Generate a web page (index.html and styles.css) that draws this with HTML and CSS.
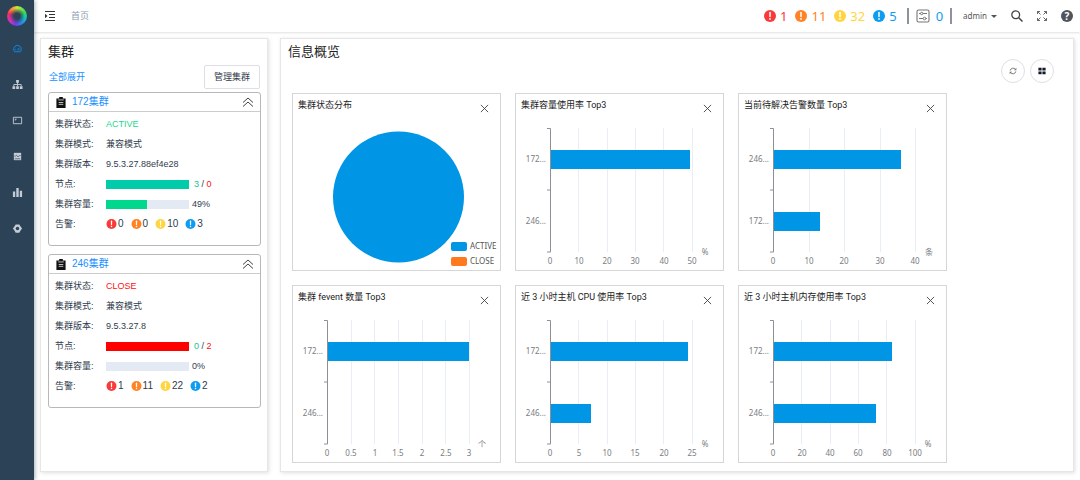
FILE: index.html
```html
<!DOCTYPE html>
<html lang="zh-CN">
<head>
<meta charset="utf-8">
<meta name="viewport" content="width=device-width, initial-scale=1">
<title>集群</title>
<link rel="stylesheet" href="styles.css">
</head>
<body>
<svg class="defs" aria-hidden="true">
  <symbol id="alert" viewBox="0 0 12 12"><circle cx="6" cy="6" r="6" fill="currentColor"/><path d="M6 2.6v4" stroke="#fff" stroke-width="1.5" stroke-linecap="round"/><circle cx="6" cy="8.9" r=".9" fill="#fff"/></symbol>
  <symbol id="close" viewBox="0 0 10 10"><path d="M1 1l8 8M9 1l-8 8" stroke="currentColor" stroke-width="1" fill="none"/></symbol>
  <symbol id="clipboard" viewBox="0 0 10 12"><path d="M0 1.500h3V0h4v1.500h3V12H0z" fill="#111"/><path d="M2 3.200h6M2.500 6h5M2.500 8h5" stroke="#fff" stroke-width=".8"/></symbol>
  <symbol id="up" viewBox="0 0 12 10"><path d="M1 5.500L6 1l5 4.500M1 9.500L6 5l5 4.500" stroke="#444" stroke-width="1" fill="none"/></symbol>
  <symbol id="axis" viewBox="0 0 207 152"><path d="M31 10.500h3.500v123.500H31M31 72h3.500" stroke="#8d9096" fill="none"/></symbol>
</svg>
<div class="shell">
  <nav class="sidebar" aria-label="主菜单">
    <div class="logo"></div>
    <a class="nav active" href="#" aria-label="总览"><svg viewBox="0 0 12 12"><path d="M3 9.500a4 4 0 1 1 6 0zM6 8l1.600-2.500M3.500 7h1M8 7h.8" fill="none" stroke="currentColor" stroke-width="1.300"/></svg></a>
    <a class="nav" href="#" aria-label="集群"><svg viewBox="0 0 12 12"><path d="M4.500 1h3v3h-3zM.5 8h3v3h-3zM4.500 8h3v3h-3zM8.500 8h3v3h-3z" fill="currentColor"/><path d="M6 3v5M2 8V6h8v2" stroke="currentColor" fill="none"/></svg></a>
    <a class="nav" href="#" aria-label="主机"><svg viewBox="0 0 12 12"><path d="M1.500 2.500h9v7h-9zM3.500 6V4.500H5" stroke="currentColor" fill="none"/></svg></a>
    <a class="nav" href="#" aria-label="监控"><svg viewBox="0 0 12 12"><path d="M2 2h8v8H2z" fill="currentColor"/><path d="M2.500 5.500H4l1-1 1.500 2L8 5h1.500M3 8.500h6" stroke="#2c4257" stroke-width=".7" fill="none"/></svg></a>
    <a class="nav" href="#" aria-label="统计"><svg viewBox="0 0 12 12"><path d="M1 5h2.500v6H1zM4.700 1h2.600v10H4.700zM8.500 4H11v7H8.500z" fill="currentColor"/></svg></a>
    <a class="nav" href="#" aria-label="设置"><svg viewBox="0 0 12 12"><path d="M4 1.500h4L9 3.200 11 6 9 8.800l-1 1.700H4L3 8.800 1 6l2-2.800z" fill="currentColor"/><circle cx="6" cy="6" r="1.900" fill="#2c4257"/></svg></a>
  </nav>
  <div class="page">
    <header class="topbar">
      <button class="icon-btn" aria-label="折叠菜单"><svg class="i12" viewBox="0 0 12 12"><path d="M1 1.500h10M5 4.500h6M5 7.500h6M1 10.500h10" stroke="#333" stroke-width="1.200"/><path d="M1 3.800L3.500 6 1 8.200z" fill="#333"/></svg></button>
      <a class="crumb" href="#">首页</a>
      <div class="counts">
        <span class="count red"><svg><use href="#alert"/></svg>1</span>
        <span class="count orange"><svg><use href="#alert"/></svg>11</span>
        <span class="count yellow"><svg><use href="#alert"/></svg>32</span>
        <span class="count blue"><svg><use href="#alert"/></svg>5</span>
      </div>
      <div class="tasks"><svg viewBox="0 0 14 14"><rect x="1" y="1" width="12" height="12" rx="1.500" fill="none" stroke="#777" stroke-width="1.100"/><path d="M3 4.500h1.500M7 4.500h4M3 9.500h4M9.800 9.500H11" stroke="#777"/><circle cx="5.700" cy="4.500" r="1.200" fill="none" stroke="#777"/><circle cx="8.500" cy="9.500" r="1.300" fill="none" stroke="#777"/></svg>0</div>
      <button class="user">admin<i class="caret"></i></button>
      <div class="tools">
        <button class="icon-btn" aria-label="搜索"><svg class="i12" viewBox="0 0 12 12"><circle cx="4.700" cy="4.700" r="3.900" fill="none" stroke="#444" stroke-width="1.300"/><path d="M7.500 7.500l4 4" stroke="#444" stroke-width="1.500"/></svg></button>
        <button class="icon-btn" aria-label="全屏"><svg class="i12" viewBox="0 0 12 12"><path d="M1.500 4V1.500H4M8 1.500h2.500V4M10.500 8v2.500H8M4 10.500H1.500V8M1.500 1.500l3 3M10.500 1.500l-3 3M1.500 10.500l3-3M10.500 10.500l-3-3" fill="none" stroke="#666"/></svg></button>
        <button class="help" aria-label="帮助">?</button>
      </div>
    </header>
    <main class="main">
      <section class="panel clusters">
        <h2>集群</h2>
        <div class="actions"><a href="#">全部展开</a><button class="manage">管理集群</button></div>
        <article class="cluster">
          <header><svg class="clip"><use href="#clipboard"/></svg><a href="#">172集群</a><button class="icon-btn" aria-label="收起"><svg class="i12"><use href="#up"/></svg></button></header>
          <dl>
            <dt>集群状态:</dt><dd class="ok">ACTIVE</dd>
            <dt>集群模式:</dt><dd>兼容模式</dd>
            <dt>集群版本:</dt><dd>9.5.3.27.88ef4e28</dd>
            <dt>节点:</dt><dd><span class="bar nodes-ok"></span><span class="nodes"><b class="teal">3</b> / <b class="bad">0</b></span></dd>
            <dt>集群容量:</dt><dd><span class="bar"><span class="fill" style="width:49%"></span></span>49%</dd>
            <dt>告警:</dt><dd class="alarms"><span><svg class="red"><use href="#alert"/></svg>0</span><span><svg class="orange"><use href="#alert"/></svg>0</span><span><svg class="yellow"><use href="#alert"/></svg>10</span><span><svg class="blue"><use href="#alert"/></svg>3</span></dd>
          </dl>
        </article>
        <article class="cluster">
          <header><svg class="clip"><use href="#clipboard"/></svg><a href="#">246集群</a><button class="icon-btn" aria-label="收起"><svg class="i12"><use href="#up"/></svg></button></header>
          <dl>
            <dt>集群状态:</dt><dd class="bad">CLOSE</dd>
            <dt>集群模式:</dt><dd>兼容模式</dd>
            <dt>集群版本:</dt><dd>9.5.3.27.8</dd>
            <dt>节点:</dt><dd><span class="bar nodes-bad"></span><span class="nodes"><b class="teal">0</b> / <b class="bad">2</b></span></dd>
            <dt>集群容量:</dt><dd><span class="bar"></span>0%</dd>
            <dt>告警:</dt><dd class="alarms"><span><svg class="red"><use href="#alert"/></svg>1</span><span><svg class="orange"><use href="#alert"/></svg>11</span><span><svg class="yellow"><use href="#alert"/></svg>22</span><span><svg class="blue"><use href="#alert"/></svg>2</span></dd>
          </dl>
        </article>
      </section>
      <section class="panel overview">
        <h2>信息概览</h2>
        <div class="round-row">
          <button class="round" aria-label="刷新"><svg viewBox="0 0 10 10"><path d="M1.500 4.500A3.600 3.600 0 0 1 8 3M8.500 5.500A3.600 3.600 0 0 1 2 7" fill="none" stroke="#777" stroke-width="1.200"/><path d="M9.200 1v3h-3zM.8 9V6h3z" fill="#777"/></svg></button>
          <button class="round" aria-label="布局"><svg viewBox="0 0 10 10"><path d="M.5 1h4v3.500h-4zM5.500 1h4v3.500h-4zM.5 5.500h4V9h-4zM5.500 5.500h4V9h-4z" fill="#141a2c"/></svg></button>
        </div>
        <div class="cards">
          <article class="card">
            <header><h3>集群状态分布</h3><button class="icon-btn" aria-label="关闭"><svg><use href="#close"/></svg></button></header>
            <svg class="chart" viewBox="0 0 207 152"><circle cx="105.500" cy="79" r="65.500" fill="#0095e5"/><rect x="158" y="124" width="16" height="9" rx="2" fill="#0095e5"/><rect x="158" y="139" width="16" height="9" rx="2" fill="#ff7a1e"/><g class="legend"><text x="177" y="131">ACTIVE</text><text x="177" y="146">CLOSE</text></g></svg>
          </article>
          <article class="card">
            <header><h3>集群容量使用率 Top3</h3><button class="icon-btn" aria-label="关闭"><svg><use href="#close"/></svg></button></header>
            <svg class="chart" viewBox="0 0 207 152"><path class="grid" d="M62.500 10v124M91.500 10v124M119.500 10v124M147.500 10v124M176.500 10v124"/><path class="bars" d="M35 32h139v19H35z"/><use href="#axis"/><g class="cat"><text x="30" y="44">172...</text><text x="30" y="106">246...</text></g><g class="tick"><text x="34" y="146">0</text><text x="63" y="146">10</text><text x="91" y="146">20</text><text x="119" y="146">30</text><text x="148" y="146">40</text><text x="176" y="146">50</text><text x="189" y="137">%</text></g></svg>
          </article>
          <article class="card">
            <header><h3>当前待解决告警数量 Top3</h3><button class="icon-btn" aria-label="关闭"><svg><use href="#close"/></svg></button></header>
            <svg class="chart" viewBox="0 0 207 152"><path class="grid" d="M70.500 10v124M105.500 10v124M141.500 10v124M176.500 10v124"/><path class="bars" d="M35 32h127v19H35zM35 94h46v19H35z"/><use href="#axis"/><g class="cat"><text x="30" y="44">246...</text><text x="30" y="106">172...</text></g><g class="tick"><text x="34" y="146">0</text><text x="70" y="146">10</text><text x="105" y="146">20</text><text x="141" y="146">30</text><text x="176" y="146">40</text><text x="190" y="137">条</text></g></svg>
          </article>
          <article class="card">
            <header><h3>集群 fevent 数量 Top3</h3><button class="icon-btn" aria-label="关闭"><svg><use href="#close"/></svg></button></header>
            <svg class="chart" viewBox="0 0 207 152"><path class="grid" d="M58.500 10v124M81.500 10v124M105.500 10v124M129.500 10v124M152.500 10v124M176.500 10v124"/><path class="bars" d="M35 32h141v19H35z"/><use href="#axis"/><g class="cat"><text x="30" y="44">172...</text><text x="30" y="106">246...</text></g><g class="tick"><text x="34" y="146">0</text><text x="58" y="146">0.5</text><text x="82" y="146">1</text><text x="105" y="146">1.5</text><text x="129" y="146">2</text><text x="153" y="146">2.5</text><text x="176" y="146">3</text><text x="189" y="137">个</text></g></svg>
          </article>
          <article class="card">
            <header><h3>近 3 小时主机 CPU 使用率 Top3</h3><button class="icon-btn" aria-label="关闭"><svg><use href="#close"/></svg></button></header>
            <svg class="chart" viewBox="0 0 207 152"><path class="grid" d="M62.500 10v124M91.500 10v124M119.500 10v124M147.500 10v124M176.500 10v124"/><path class="bars" d="M35 32h137v19H35zM35 94h40v19H35z"/><use href="#axis"/><g class="cat"><text x="30" y="44">172...</text><text x="30" y="106">246...</text></g><g class="tick"><text x="34" y="146">0</text><text x="63" y="146">5</text><text x="91" y="146">10</text><text x="119" y="146">15</text><text x="148" y="146">20</text><text x="176" y="146">25</text><text x="189" y="137">%</text></g></svg>
          </article>
          <article class="card">
            <header><h3>近 3 小时主机内存使用率 Top3</h3><button class="icon-btn" aria-label="关闭"><svg><use href="#close"/></svg></button></header>
            <svg class="chart" viewBox="0 0 207 152"><path class="grid" d="M62.500 10v124M91.500 10v124M119.500 10v124M147.500 10v124M176.500 10v124"/><path class="bars" d="M35 32h118v19H35zM35 94h102v19H35z"/><use href="#axis"/><g class="cat"><text x="30" y="44">172...</text><text x="30" y="106">246...</text></g><g class="tick"><text x="34" y="146">0</text><text x="63" y="146">20</text><text x="91" y="146">40</text><text x="119" y="146">60</text><text x="148" y="146">80</text><text x="176" y="146">100</text><text x="189" y="137">%</text></g></svg>
          </article>
        </div>
      </section>
    </main>
  </div>
</div>
</body>
</html>
```
FILE: styles.css
```css
* { box-sizing: border-box; }
body { margin: 0; background: #fff; color: #303c4c; font: 9px/20px "Liberation Sans", "Noto Sans CJK SC", sans-serif; }
h2, h3, dl, dd { margin: 0; }
a { color: #1890ff; text-decoration: none; }
button { margin: 0; padding: 0; border: 0; background: none; color: inherit; font: inherit; cursor: pointer; }
svg { display: block; flex: none; }
.defs { display: none; }
.shell { display: flex; min-height: 100vh; }

.sidebar { flex: none; width: 34px; padding-top: 6px; background: #2c4257; box-shadow: 1px 0 4px rgba(0, 20, 40, .35); display: flex; flex-direction: column; align-items: center; }
.logo { width: 20px; height: 20px; margin-bottom: 4px; border-radius: 50%; background: radial-gradient(circle, #2c4257 0 20%, transparent 55%), conic-gradient(#c8e63c, #40dc50 60deg, #10c8b8 100deg, #3080e8 150deg, #7040e0 190deg, #d030c0 230deg, #f03060 285deg, #ff9030 325deg, #c8e63c); }
.nav { display: flex; align-items: center; justify-content: center; width: 100%; height: 36px; color: #c3ccd6; }
.nav svg { width: 11px; height: 11px; }
.nav.active { color: #1677c0; }

.page { flex: 1; min-width: 0; display: flex; flex-direction: column; }
.topbar { display: flex; align-items: center; height: 32px; padding: 0 7px 0 10px; box-shadow: 0 1px 2px rgba(0, 0, 0, .12); }
.i12 { width: 12px; height: 12px; }
.crumb { margin-left: 15px; color: #8c9db0; }
.counts { display: flex; gap: 8px; margin-left: auto; }
.count { display: flex; align-items: center; gap: 4px; font: 13px/16px "Noto Sans", sans-serif; }
.count svg { width: 12px; height: 12px; }
.red { color: #fa3939; }
.orange { color: #ff8225; }
.yellow { color: #ffd541; }
.blue { color: #0c9df2; }
.tasks { display: flex; align-items: center; gap: 6px; height: 16px; margin-left: 10px; padding: 0 7px; border: solid #8c939b; border-width: 0 2px; color: #0c9df2; font: 13px/16px "Noto Sans", sans-serif; }
.tasks svg { width: 14px; height: 14px; }
.user { display: flex; align-items: center; gap: 4px; margin-left: 11px; color: #555; font: 8px/16px "Noto Sans", sans-serif; }
.caret { border: 3px solid transparent; border-top-color: #555; border-bottom: 0; }
.tools { display: flex; align-items: center; gap: 13px; margin-left: 14px; }
.help { width: 12px; height: 12px; border-radius: 50%; background: #50555c; color: #fff; font: bold 10px/12px "Noto Sans", sans-serif; }

.main { flex: 1; display: flex; gap: 12px; padding: 6px 6px 8px 6px; }
.panel { border: 1px solid #e6e6e6; background: #fff; box-shadow: 1px 1px 4px rgba(0, 0, 0, .13); }
.panel h2 { color: #222; font-size: 13px; font-weight: 400; line-height: 24px; }
.clusters { flex: none; width: 228px; padding: 1px 6px 12px 7px; }
.overview { flex: 1; min-width: 0; padding: 1px 7px 8px; }
.actions { display: flex; align-items: center; justify-content: space-between; height: 24px; margin: 1px 1px 3px; }
.manage { width: 56px; height: 24px; border: 1px solid #dcdfe6; border-radius: 2px; }
.cluster { margin-bottom: 8px; border: 1px solid #b8b8b8; border-radius: 3px; }
.cluster header { display: flex; align-items: center; height: 19px; padding: 0 6px 0 7px; border-bottom: 1px solid #ccc; font-size: 10px; }
.cluster header a { flex: 1; margin-left: 6px; }
.clip { width: 10px; height: 11px; }
.cluster dl { display: grid; grid-template-columns: 51px 1fr; grid-auto-rows: 20px; padding: 2px 0 11px 6px; }
.cluster dd { display: flex; align-items: center; gap: 3px; }
.bar { width: 83px; height: 9px; background: #e4eaf4; }
.fill { display: block; height: 100%; background: #00d98d; }
.nodes-ok { background: #00ccab; }
.nodes-bad { background: #f00; }
.nodes { margin-left: 2px; }
.nodes b { font-weight: 400; }
.ok { color: #1bd88f; }
.teal { color: #12c49b; }
.bad { color: #f11; }
.cluster .alarms { gap: 7px; font-size: 10px; }
.alarms span { display: flex; align-items: center; gap: 1px; }
.alarms svg { width: 11px; height: 10px; }

.round-row { display: flex; justify-content: flex-end; gap: 5px; padding-right: 12px; margin-bottom: 10px; margin-top: -5px; }
.round { display: flex; align-items: center; justify-content: center; width: 24px; height: 24px; border: 1px solid #dcdfe6; border-radius: 50%; }
.round svg { width: 8px; height: 8px; }
.cards { display: grid; grid-template-columns: repeat(auto-fill, 209px); gap: 14px; padding-left: 4px; }
.card { border: 1px solid #d6d6d6; }
.card header { display: flex; justify-content: space-between; height: 24px; padding: 2px 11px 0 5px; }
.card h3 { color: #222; font: 9px/18px Roboto, "Noto Sans CJK SC", sans-serif; }
.card header svg { width: 9px; height: 9px; color: #444; }
.card .icon-btn { padding-top: 3px; }
.chart { width: 100%; font: 8px "Noto Sans", "Noto Sans CJK SC", sans-serif; fill: #7a7d84; }
.chart .grid { stroke: #e8edf6; fill: none; }
.chart .bars { fill: #0095e5; }
.cat { text-anchor: end; }
.tick { text-anchor: middle; }
.legend { fill: #555; }
```
